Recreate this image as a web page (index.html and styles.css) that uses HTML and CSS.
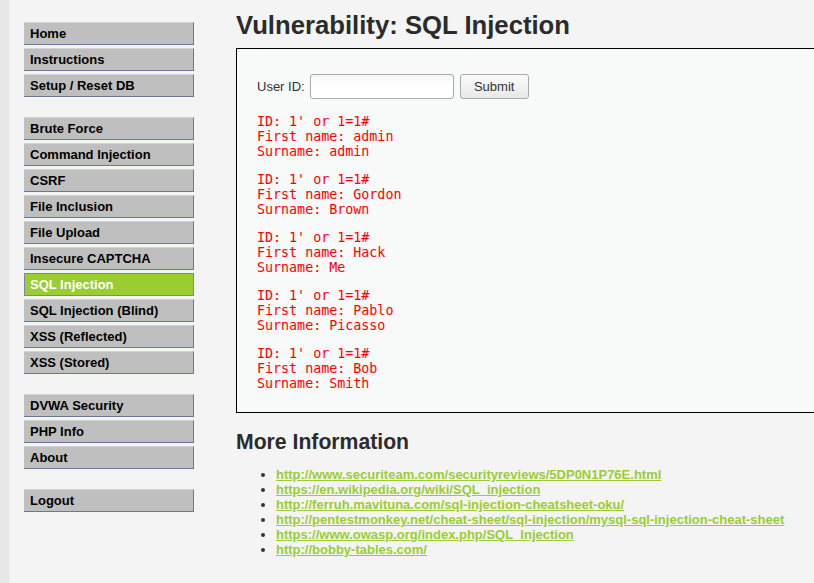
FILE: index.html
```
<!DOCTYPE html>
<html>
<head>
<meta charset="utf-8">
<title>Vulnerability: SQL Injection</title>
<link rel="stylesheet" href="styles.css">
</head>
<body>
<div class="strip"></div>
<nav class="menu">
  <ul class="group">
    <li><a href="#">Home</a></li>
    <li><a href="#">Instructions</a></li>
    <li><a href="#">Setup / Reset DB</a></li>
  </ul>
  <ul class="group">
    <li><a href="#">Brute Force</a></li>
    <li><a href="#">Command Injection</a></li>
    <li><a href="#">CSRF</a></li>
    <li><a href="#">File Inclusion</a></li>
    <li><a href="#">File Upload</a></li>
    <li><a href="#">Insecure CAPTCHA</a></li>
    <li class="selected"><a href="#">SQL Injection</a></li>
    <li><a href="#">SQL Injection (Blind)</a></li>
    <li><a href="#">XSS (Reflected)</a></li>
    <li><a href="#">XSS (Stored)</a></li>
  </ul>
  <ul class="group">
    <li><a href="#">DVWA Security</a></li>
    <li><a href="#">PHP Info</a></li>
    <li><a href="#">About</a></li>
  </ul>
  <ul class="group">
    <li><a href="#">Logout</a></li>
  </ul>
</nav>
<main class="main">
  <h1 class="title">Vulnerability: SQL Injection</h1>
  <div class="vuln-area">
    <form class="form">
      <label class="label">User ID:</label>
      <input class="field" type="text" name="id">
      <button class="btn" type="button">Submit</button>
    </form>
<pre class="out">ID: 1' or 1=1#
First name: admin
Surname: admin</pre>
<pre class="out">ID: 1' or 1=1#
First name: Gordon
Surname: Brown</pre>
<pre class="out">ID: 1' or 1=1#
First name: Hack
Surname: Me</pre>
<pre class="out">ID: 1' or 1=1#
First name: Pablo
Surname: Picasso</pre>
<pre class="out">ID: 1' or 1=1#
First name: Bob
Surname: Smith</pre>
  </div>
  <h2 class="subtitle">More Information</h2>
  <ul class="links">
    <li><a href="#">http://www.securiteam.com/securityreviews/5DP0N1P76E.html</a></li>
    <li><a href="#">https://en.wikipedia.org/wiki/SQL_injection</a></li>
    <li><a href="#">http://ferruh.mavituna.com/sql-injection-cheatsheet-oku/</a></li>
    <li><a href="#">http://pentestmonkey.net/cheat-sheet/sql-injection/mysql-sql-injection-cheat-sheet</a></li>
    <li><a href="#">https://www.owasp.org/index.php/SQL_Injection</a></li>
    <li><a href="#">http://bobby-tables.com/</a></li>
  </ul>
</main>
</body>
</html>
```
FILE: styles.css
```
html, body {
  margin: 0;
  padding: 0;
  overflow: hidden;
}
body {
  display: flex;
  align-items: flex-start;
  min-height: 583px;
  background: #f4f4f4;
  font-family: "Liberation Sans", Arial, sans-serif;
  color: #333;
}
.strip {
  width: 9px;
  align-self: stretch;
  background: #e7e7e7;
  flex: none;
}
.menu {
  flex: none;
  width: 170px;
  margin-left: 15px;
  padding-top: 22px;
}
.group {
  list-style: none;
  margin: 0 0 20px 0;
  padding: 0;
  display: flex;
  flex-direction: column;
  gap: 3px;
}
.group li a {
  display: block;
  padding: 3px 6px;
  line-height: 15px;
  font-size: 13px;
  font-weight: bold;
  color: #000;
  text-decoration: none;
  background: #bfbfbf;
  border-top: 1px solid #d4d4d4;
  border-right: 1px solid #6c7893;
  border-bottom: 1px solid #6c7893;
}
.group li.selected a {
  background: #9acd32;
  color: #fff;
  border: 1px solid #7a86a6;
  padding-left: 5px;
}
.main {
  flex: none;
  margin-left: 42px;
  width: 700px;
}
.title {
  margin: 10px 0 8px 0;
  font-size: 25.7px;
  line-height: 30px;
  font-weight: bold;
  color: #2b2b2b;
}
.vuln-area {
  background: #f8f9f9;
  border: 1px solid #000;
  padding: 25px 20px 8px 20px;
}
.form {
  display: flex;
  align-items: center;
  margin: 0 0 15px 0;
}
.label {
  font-size: 13px;
  color: #333;
  margin-right: 5px;
}
.field {
  box-sizing: border-box;
  width: 144px;
  height: 25px;
  margin: 0 6px 0 0;
  border: 1px solid #a9a9a9;
  border-radius: 3px;
  background: linear-gradient(#f4f4f4, #ffffff 40%);
  padding: 2px 4px;
}
.btn {
  box-sizing: border-box;
  width: 69px;
  height: 25px;
  border: 1px solid #aaa;
  border-radius: 3px;
  background: linear-gradient(#fbfbfb, #e8e8e8);
  font-family: "Liberation Sans", Arial, sans-serif;
  font-size: 13px;
  color: #333;
  padding: 0;
}
.out {
  margin: 0 0 13px 0;
  font-family: "DejaVu Sans Mono", monospace;
  font-size: 13.33px;
  line-height: 15px;
  color: #f00;
}
.subtitle {
  margin: 17px 0 0 0;
  font-size: 21.2px;
  line-height: 24px;
  font-weight: bold;
  color: #2b2b2b;
}
.links {
  margin: 13px 0 0 0;
  padding-left: 40px;
  font-size: 13px;
  line-height: 15px;
  font-weight: bold;
}
.links li a {
  color: #9acd32;
  text-decoration: underline;
}
```
